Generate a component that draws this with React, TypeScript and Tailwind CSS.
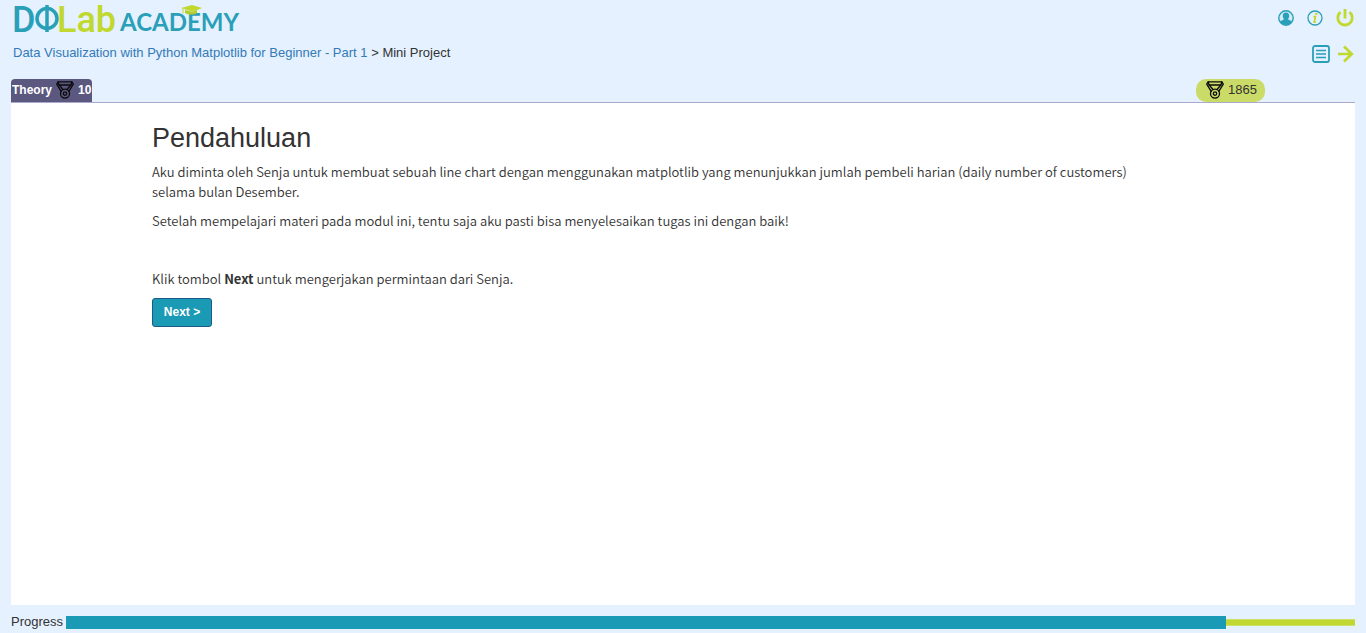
import React from "react";

const PROGRESS = 90;

function Medal() {
  return (
    <svg viewBox="0 0 18 18" className="size-[18px] shrink-0" fill="none" stroke="#0a0a0a" strokeWidth="1.3" strokeLinejoin="round" strokeLinecap="round" aria-hidden="true">
      <path d="M2.200.8h13.600l-.8 3.200H3z" />
      <path d="M2.200.8L.7 3.200l4.500 7.200M15.800.8L17.300 3.200l-4.500 7.200" />
      <path d="M3.200 4l3.800 4.500M14.800 4L11 8.500" />
      <circle cx="9" cy="12.600" r="4.500" />
      <circle cx="9" cy="12.600" r="1.700" />
    </svg>
  );
}

function Logo() {
  return (
    <svg viewBox="0 0 228 36" className="h-9 w-[228px] overflow-visible" role="img" aria-label="DQLab Academy">
      <g fontFamily="Roboto, sans-serif" fontSize="36" fontWeight="500">
        <text x="-1" y="32" fill="#2a9fb8">D</text>
        <text x="44" y="32" fill="#c1d82f">Lab</text>
      </g>
      <circle cx="34" cy="18.500" r="10" fill="none" stroke="#2a9fb8" strokeWidth="3.500" />
      <path d="M34 5v27" stroke="#2a9fb8" strokeWidth="3.500" />
      <text x="107" y="31" fill="#2a9fb8" fontFamily="Lato, sans-serif" fontSize="24" fontWeight="700">ACADEMY</text>
      <path d="M168 8l11-3 10 3-9 4z" fill="#c1d82f" />
      <path d="M172 10v3c4 2 9 2 12 0v-3l-4 2z" fill="#b4cc2c" />
      <path d="M170 8.500v5" stroke="#c1d82f" strokeWidth="1" />
    </svg>
  );
}

function UserIcon() {
  return (
    <svg viewBox="0 0 16 16" className="size-4" aria-hidden="true">
      <circle cx="8" cy="8" r="7.200" fill="#d3ebf6" stroke="#2a9fb8" strokeWidth="1.400" />
      <path d="M8 2.600c2.300 0 3.300 1.600 3.200 3.500 0 1.300-.6 2.300-1.300 3 .2.900 3 1.200 3.900 2.700A7 7 0 0 1 8 15a7 7 0 0 1-5.800-3.200c.9-1.500 3.700-1.800 3.900-2.700-.7-.7-1.300-1.700-1.300-3C4.700 4.200 5.700 2.600 8 2.600z" fill="#2a9fb8" />
    </svg>
  );
}

function InfoIcon() {
  return (
    <svg viewBox="0 0 16 16" className="size-4" fill="none" aria-hidden="true">
      <circle cx="8" cy="8" r="7" stroke="#2a9fb8" strokeWidth="1.300" />
      <path d="M6.400 6.600h2L7.200 12h1.600" stroke="#c1d82f" strokeWidth="1.800" />
      <circle cx="9.300" cy="3.900" r="1.200" fill="#c1d82f" />
    </svg>
  );
}

function PowerIcon() {
  return (
    <svg viewBox="0 0 18 18" className="size-[18px]" fill="none" stroke="#c1d82f" strokeWidth="2.800" aria-hidden="true">
      <path d="M4.500 3.200A7.200 7.200 0 1 0 13.500 3.200M9 0v9.500" />
    </svg>
  );
}

function ListIcon() {
  return (
    <svg viewBox="0 0 18 18" className="size-[18px]" fill="none" stroke="#2a9fb8" aria-hidden="true">
      <rect x="1" y="1" width="16" height="16" rx="2" strokeWidth="1.800" />
      <path d="M4 5.500h10M4 9h10M4 12.500h10" strokeWidth="1.300" />
    </svg>
  );
}

function ArrowIcon() {
  return (
    <svg viewBox="0 0 16 18" className="h-[18px] w-4" fill="none" stroke="#c1d82f" strokeWidth="2.700" aria-hidden="true">
      <path d="M0 9h14M6 1.500L13.800 9 6 16.500" />
    </svg>
  );
}

export default function App() {
  return (
    <div className="flex min-h-screen flex-col bg-[#e5f1ff] px-[11px] font-['Liberation_Sans',Arial,sans-serif] text-[13px] leading-5 text-[#333]">
      <header className="flex justify-between">
        <div className="pl-[2px]">
          <a href="#home" className="block"><Logo /></a>
          <nav className="mt-[7px]" aria-label="Breadcrumb">
            <a href="#course" className="text-[#337ab7]">Data Visualization with Python Matplotlib for Beginner - Part 1</a> &gt; Mini Project
          </nav>
        </div>
        <div className="flex flex-col items-end gap-[18px] pt-[9px] pr-px">
          <div className="flex h-[18px] items-center gap-[13px]">
            <button type="button" aria-label="Profile"><UserIcon /></button>
            <button type="button" aria-label="Information"><InfoIcon /></button>
            <button type="button" aria-label="Log out"><PowerIcon /></button>
          </div>
          <div className="flex h-[18px] items-center gap-2">
            <button type="button" aria-label="Table of contents"><ListIcon /></button>
            <button type="button" aria-label="Next page"><ArrowIcon /></button>
          </div>
        </div>
      </header>

      <div className="mt-4 flex items-end justify-between border-b border-[#a9a9cd]">
        <div className="flex h-[23px] items-center gap-1 rounded-t bg-[#5b5880] px-px pb-[2px] text-[12px] font-bold text-white">
          <span>Theory</span>
          <Medal />
          <span>10</span>
        </div>
        <div className="mr-[90px] flex h-[23px] items-center gap-1 rounded-[10px] bg-[#cadb67] pr-2 pb-[2px] pl-[10px]">
          <Medal />
          <span>1865</span>
        </div>
      </div>

      <main className="grow bg-white pr-[190px] pl-[141px] pt-[15px] font-['Noto_Sans_CJK_SC',sans-serif] font-[350]">
        <h1 className="font-['Liberation_Sans',Arial,sans-serif] text-[27px] leading-10">Pendahuluan</h1>
        <div className="mt-1 flex flex-col items-start gap-[9px]">
          <p>Aku diminta oleh Senja untuk membuat sebuah line chart dengan menggunakan matplotlib yang menunjukkan jumlah pembeli harian (daily number of customers) selama bulan Desember.</p>
          <p>Setelah mempelajari materi pada modul ini, tentu saja aku pasti bisa menyelesaikan tugas ini dengan baik!</p>
          <p>&nbsp;</p>
          <p>Klik tombol <strong>Next</strong> untuk mengerjakan permintaan dari Senja.</p>
          <button type="button" className="flex h-[29px] w-[60px] items-center justify-center rounded-[3px] border border-[#1c5a85] bg-[#1a9ab4] pb-[2px] font-['Liberation_Sans',Arial,sans-serif] text-[12px] font-bold text-white">
            Next &gt;
          </button>
        </div>
      </main>

      <footer className="flex h-7 items-center gap-[3px] pt-[6px]">
        <span id="progress-label">Progress</span>
        <div role="progressbar" aria-labelledby="progress-label" aria-valuenow={PROGRESS} aria-valuemin={0} aria-valuemax={100} className="flex grow items-center">
          <div className="h-[13px] bg-[#1a9ab4]" style={{ width: `${PROGRESS}%` }} />
          <div className="h-[7px] grow border-y border-[#cde06a] bg-[#c1d832]" />
        </div>
      </footer>
    </div>
  );
}
